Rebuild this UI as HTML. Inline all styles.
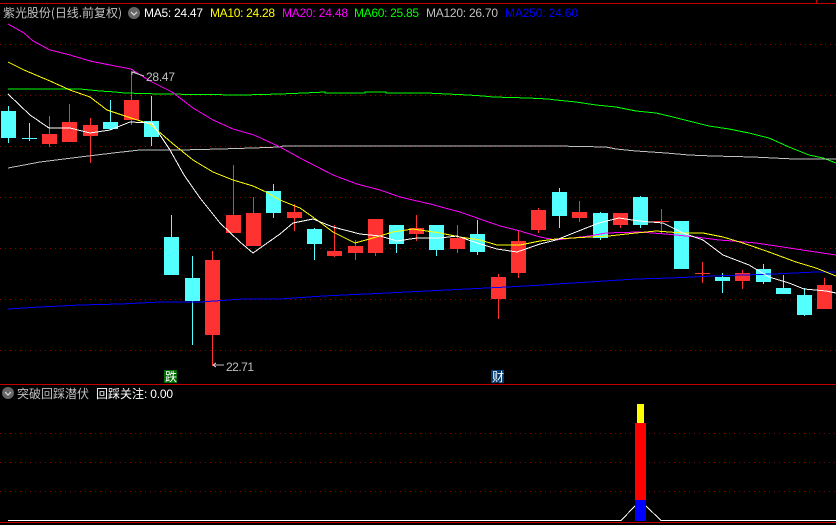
<!DOCTYPE html>
<html><head><meta charset="utf-8"><style>
html,body{margin:0;padding:0;background:#000;width:836px;height:525px;overflow:hidden}
svg{display:block}
text{font-family:"Liberation Sans","WenQuanYi Zen Hei","Noto Sans CJK SC",sans-serif;font-size:12px}
.c{font-family:"WenQuanYi Zen Hei","Noto Sans CJK SC",sans-serif}
</style></head><body>
<svg width="836" height="525" viewBox="0 0 836 525" xmlns="http://www.w3.org/2000/svg">
<rect width="836" height="525" fill="#000"/>
<g stroke="#8a0000" stroke-width="1" stroke-dasharray="1 4" shape-rendering="crispEdges" fill="none">
<path d="M0 44.5H836M0 95.5H836M0 146.5H836M0 197.5H836M0 248.5H836M0 299.5H836M0 350.5H836"/>
<path d="M0 433.5H634M649 433.5H836M0 462.5H634M649 462.5H836M0 491.5H634M649 491.5H836"/>
</g>
<g fill="#c00000" shape-rendering="crispEdges">
<rect x="0" y="3" width="836" height="1"/>
<rect x="816" y="0" width="1" height="3"/>
<rect x="0" y="384" width="836" height="1"/>
<rect x="0" y="522" width="836" height="1"/>
</g>
<g shape-rendering="crispEdges" stroke-width="1" fill="none">
<path stroke="#54ffff" d="M8.5 106V143M29.5 123V141M110.5 100V130M151.5 96V146M171.5 215V237M192.5 256V345M273.5 184V218M314.5 228V260M396.5 225V253M436.5 225V256M477.5 220V255M559.5 188V228M600.5 212V240M640.5 196V228M722.5 273V293M763.5 264V284M783.5 275V288M804.5 288V316"/>
<path stroke="#ff3232" d="M49.5 116V147M69.5 104V142M90.5 118V163M131.5 71V125M212.5 251V366M233.5 165V215M253.5 197V246M294.5 204V231M334.5 225V257M355.5 240V260M375.5 219V256M416.5 215V241M457.5 225V253M498.5 274V319M518.5 231V278M538.5 208V233M579.5 201V222M620.5 213V228M661.5 209V233M702.5 262V283M742.5 270V289M824.5 278V309"/>
<path fill="#54ffff" d="M1 111h15v27h-15zM22 138h15v1h-15zM103 122h15v7h-15zM144 121h15v16h-15zM164 237h15v38h-15zM185 278h15v23h-15zM266 191h15v22h-15zM307 229h15v15h-15zM389 225h15v19h-15zM429 225h15v25h-15zM470 234h15v18h-15zM552 192h15v24h-15zM593 213h15v25h-15zM633 197h15v28h-15zM674 221h15v48h-15zM715 277h15v4h-15zM756 269h15v13h-15zM776 288h15v6h-15zM797 295h15v20h-15z"/>
<path fill="#ff3232" d="M42 134h15v10h-15zM62 122h15v20h-15zM83 125h15v11h-15zM124 100h15v20h-15zM205 260h15v75h-15zM226 215h15v18h-15zM246 213h15v33h-15zM287 212h15v6h-15zM327 251h15v5h-15zM348 246h15v7h-15zM368 219h15v34h-15zM409 228h15v6h-15zM450 238h15v11h-15zM491 277h15v22h-15zM511 241h15v32h-15zM531 210h15v20h-15zM572 212h15v6h-15zM613 213h15v12h-15zM654 221h15v1h-15zM695 273h15v1h-15zM735 273h15v8h-15zM817 285h15v24h-15z"/>
</g>
<g fill="none" stroke-width="1" shape-rendering="crispEdges">
<polyline stroke="#00ff00" points="8,89 80,89 100,91 115,92 125,93 160,94 243,95 280,94 304,93 325,92 325,93 365,93 365,92 386,92 386,93 427,93 447,94 468,95 483,96 493,97 528,98 548,99 556,100 576,102 596,105 616,107 636,111 656,113 673,117 689,121 709,126 729,129 749,133 769,138 789,147 809,155 823,158 836,163"/>
<polyline stroke="#c0c0c0" points="8,168 40,162 80,157 113,153 140,150 180,150 220,149 253,148 280,147 283,146 556,146 606,147 616,149 636,151 666,153 689,155 713,156 753,157 794,159 836,159"/>
<polyline stroke="#0000ff" points="8,309 40,307 80,305 120,304 160,302 200,302 243,299 280,299 323,296 387,293 427,291 467,289 507,287 543,285 556,284 589,282 636,279 671,278 713,276 773,274 816,272 836,272"/>
<polyline stroke="#ff00ff" points="8,24 24,33 33,41 50,50 70,55 90,61 110,65 131,69 150,81 172,92 193,108 213,120 233,129 254,135 280,147 300,158 333,175 357,184 380,190 400,197 430,204 460,212 477,218 500,226 520,231 540,237 556,240 589,236 606,233 639,232 666,234 696,237 719,240 733,241 756,243 783,247 809,251 836,255"/>
<polyline stroke="#ffff00" points="8,62 24,70 50,81 70,90 90,97 107,110 131,118 150,124 172,143 193,160 213,172 233,180 253,186 266,192 280,200 300,208 317,220 333,232 355,243 373,238 393,232 413,229 440,233 460,237 480,240 497,245 520,245 540,241 556,239 589,237 609,236 636,233 656,231 669,232 683,233 703,233 723,237 743,243 769,252 796,262 816,268 836,276"/>
<polyline stroke="#ffffff" points="8,94 30,115 49,128 70,128 90,133 110,130 130,122 152,123 170,150 184,175 200,198 220,223 240,242 253,253 280,234 293,223 313,219 333,227 360,234 380,236 397,241 417,238 440,238 457,236 477,243 497,249 517,252 540,244 556,240 576,232 599,223 619,218 639,221 663,223 683,233 703,240 723,255 749,265 769,277 789,283 804,289 826,291 836,293"/>
<polyline stroke="#fff" points="8,520.5 621,520.5 635,506 646,506 661,520.5 836,520.5"/>
</g>
<g shape-rendering="crispEdges">
<rect x="637" y="404" width="7" height="19" fill="#ffff00"/>
<rect x="635" y="423" width="11" height="77" fill="#ff0000"/>
<rect x="635" y="500" width="11" height="21" fill="#0000ff"/>
<rect x="164" y="370" width="13" height="13" fill="#006e00"/>
<rect x="491" y="370" width="13" height="13" fill="#003a70"/>
</g>
<circle cx="134" cy="13" r="6" fill="#666"/>
<path d="M131 12l3 3 3-3" fill="none" stroke="#ddd" stroke-width="1.2"/>
<circle cx="8" cy="393" r="6" fill="#666"/>
<path d="M5 392l3 3 3-3" fill="none" stroke="#ddd" stroke-width="1.2"/>
<path d="M132 72L144 76M132 72V75M132 72H135M213 365H224M213 365l3-2M213 365l3 2" fill="none" stroke="#c0c0c0" stroke-width="1" shape-rendering="crispEdges"/>
<text class="c" x="3" y="17" fill="#c0c0c0" textLength="119" lengthAdjust="spacing">紫光股份(日线.前复权)</text>
<text x="144" y="17" fill="#fff" textLength="59" lengthAdjust="spacing">MA5: 24.47</text>
<text x="210" y="17" fill="#ffff00" textLength="65" lengthAdjust="spacing">MA10: 24.28</text>
<text x="282" y="17" fill="#ff00ff" textLength="66" lengthAdjust="spacing">MA20: 24.48</text>
<text x="354" y="17" fill="#00ff00" textLength="65" lengthAdjust="spacing">MA60: 25.85</text>
<text x="426" y="17" fill="#c0c0c0" textLength="72" lengthAdjust="spacing">MA120: 26.70</text>
<text x="505" y="17" fill="#0000ff" textLength="73" lengthAdjust="spacing">MA250: 24.60</text>
<text x="146" y="81" fill="#c0c0c0" textLength="29" lengthAdjust="spacing">28.47</text>
<text x="226" y="371" fill="#c0c0c0" textLength="28" lengthAdjust="spacing">22.71</text>
<text class="c" x="165" y="381" fill="#fff">跌</text>
<text class="c" x="492" y="381" fill="#fff">财</text>
<text class="c" x="17" y="398" fill="#c0c0c0">突破回踩潜伏</text>
<text class="c" x="96" y="398" fill="#fff">回踩关注</text>
<text x="144" y="398" fill="#fff" textLength="29" lengthAdjust="spacing">: 0.00</text>
</svg>
</body></html>
